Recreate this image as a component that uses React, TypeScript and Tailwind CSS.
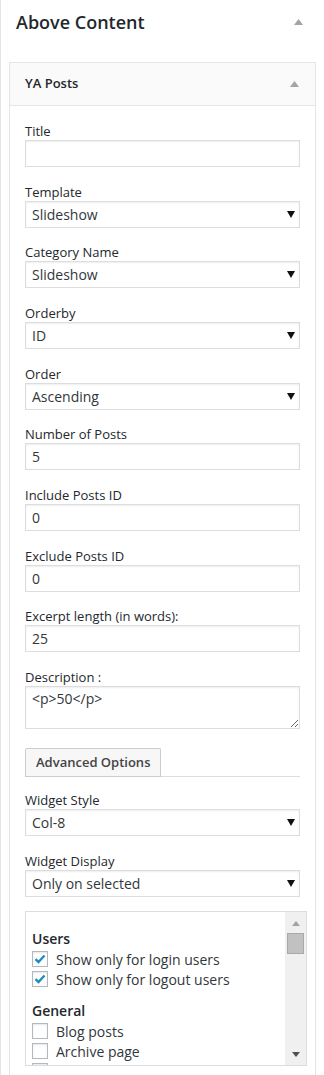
import React from 'react';

const font = { fontFamily: '"Open Sans", "Liberation Sans", sans-serif' };

function Caret({ className }: { className: string }) {
  return (
    <svg width="9" height="6" viewBox="0 0 9 6" className={className}>
      <polygon points="0,6 4.5,0 9,6" fill="#a0a5aa" />
    </svg>
  );
}

function Label({ children }: { children: React.ReactNode }) {
  return <div className="pt-[1px] text-[13px] leading-[18px] text-[#23282d]">{children}</div>;
}

function TextField({ label, value }: { label: string; value: string }) {
  return (
    <div className="mb-[14.67px]">
      <Label>{label}</Label>
      <input
        defaultValue={value}
        className="block h-[27px] w-[275px] border border-[#dddddd] bg-white px-[6px] text-[14px] text-[#32373c] shadow-[inset_0_1px_2px_rgba(0,0,0,0.07)] outline-none"
        style={font}
      />
    </div>
  );
}

function SelectField({ label, value }: { label: string; value: string }) {
  return (
    <div className="mb-[14.67px]">
      <Label>{label}</Label>
      <div className="flex h-[27px] w-[275px] items-center justify-between border border-[#dddddd] bg-white pl-[6px] pr-[4px] text-[14px] text-[#32373c] shadow-[inset_0_1px_2px_rgba(0,0,0,0.07)]">
        <span>{value}</span>
        <svg width="8" height="7" viewBox="0 0 8 7">
          <polygon points="0,0 8,0 4,7" fill="#111111" />
        </svg>
      </div>
    </div>
  );
}

function Check({ checked, label }: { checked?: boolean; label: string }) {
  return (
    <div className="flex h-[20px] items-center">
      <div className="mr-[8px] flex h-[16px] w-[16px] items-center justify-center border border-[#b4b9be] bg-white shadow-[inset_0_1px_2px_rgba(0,0,0,0.1)]">
        {checked && (
          <svg width="12" height="10" viewBox="0 0 12 10">
            <path d="M1.5 5.2 L4.5 8 L10.5 1.5" stroke="#1e8cbe" strokeWidth="2.4" fill="none" />
          </svg>
        )}
      </div>
      <span className="text-[14px] text-[#32373c]">{label}</span>
    </div>
  );
}

export default function App() {
  return (
    <div className="min-h-screen border-l border-[#e5e5e5] bg-white" style={font}>
      {/* Sidebar header */}
      <div className="flex h-[44px] items-center justify-between pl-[15px] pr-[21px] pt-[1px]">
        <h2 className="text-[18px] font-semibold text-[#23282d]">Above Content</h2>
        <Caret className="mb-[1px]" />
      </div>

      <div className="ml-[8px] mt-[18px] w-[307px] border border-[#e5e5e5] bg-white">
        {/* Widget header */}
        <div className="flex h-[43px] items-center justify-between border-b border-[#e5e5e5] bg-[#fafafa] pl-[15px] pr-[16px]">
          <span className="text-[13px] font-semibold text-[#23282d]">YA Posts</span>
          <Caret className="" />
        </div>

        {/* Widget form */}
        <div className="px-[15px] pt-[15px]">
          <TextField label="Title" value="" />
          <SelectField label="Template" value="Slideshow" />
          <SelectField label="Category Name" value="Slideshow" />
          <SelectField label="Orderby" value="ID" />
          <SelectField label="Order" value="Ascending" />
          <TextField label="Number of Posts" value="5" />
          <TextField label="Include Posts ID" value="0" />
          <TextField label="Exclude Posts ID" value="0" />
          <TextField label="Excerpt length (in words):" value="25" />

          <div>
            <Label>Description :</Label>
            <textarea
              defaultValue="<p>50</p>"
              className="block h-[43px] w-[275px] border border-[#dddddd] bg-white px-[6px] py-[2px] text-[14px] leading-[20px] text-[#32373c] shadow-[inset_0_1px_2px_rgba(0,0,0,0.07)] outline-none"
              style={font}
            />
          </div>

          <div className="mt-[19px] w-[275px] border-b border-[#dddddd]">
            <button className="flex h-[28px] items-center rounded-t-[2px] border border-b-0 border-[#cccccc] bg-[#f7f7f7] px-[10px] text-[13px] font-semibold text-[#444444] shadow-[0_1px_0_#cccccc]">
              Advanced Options
            </button>
          </div>

          <div className="mt-[13px]">
            <SelectField label="Widget Style" value="Col-8" />
            <SelectField label="Widget Display" value="Only on selected" />
          </div>

          {/* Page checklist */}
          <div className="mt-[0.33px] flex h-[155px] w-[282px] border border-[#dddddd] bg-white">
            <div className="flex-1 overflow-hidden pl-[6px] pt-[17px]">
              <div className="text-[14px] font-semibold leading-[20px] text-[#23282d]">Users</div>
              <Check checked label="Show only for login users" />
              <Check checked label="Show only for logout users" />
              <div className="mt-[12px] text-[14px] font-semibold leading-[20px] text-[#23282d]">General</div>
              <Check label="Blog posts" />
              <Check label="Archive page" />
              <Check label="Search results" />
            </div>
            <div className="flex w-[21px] flex-col items-center bg-[#f0f0f0]">
              <svg width="8" height="5" viewBox="0 0 8 5" className="mt-[9px]">
                <polygon points="0,5 4,0 8,5" fill="#a3a3a3" />
              </svg>
              <div className="mt-[7px] h-[21px] w-[17px] border border-[#a9a9a9] bg-[#c1c1c1]" />
              <div className="flex-1" />
              <svg width="8" height="5" viewBox="0 0 8 5" className="mb-[8px]">
                <polygon points="0,0 8,0 4,5" fill="#505050" />
              </svg>
            </div>
          </div>
          <div className="h-[20px]" />
        </div>
      </div>
    </div>
  );
}
